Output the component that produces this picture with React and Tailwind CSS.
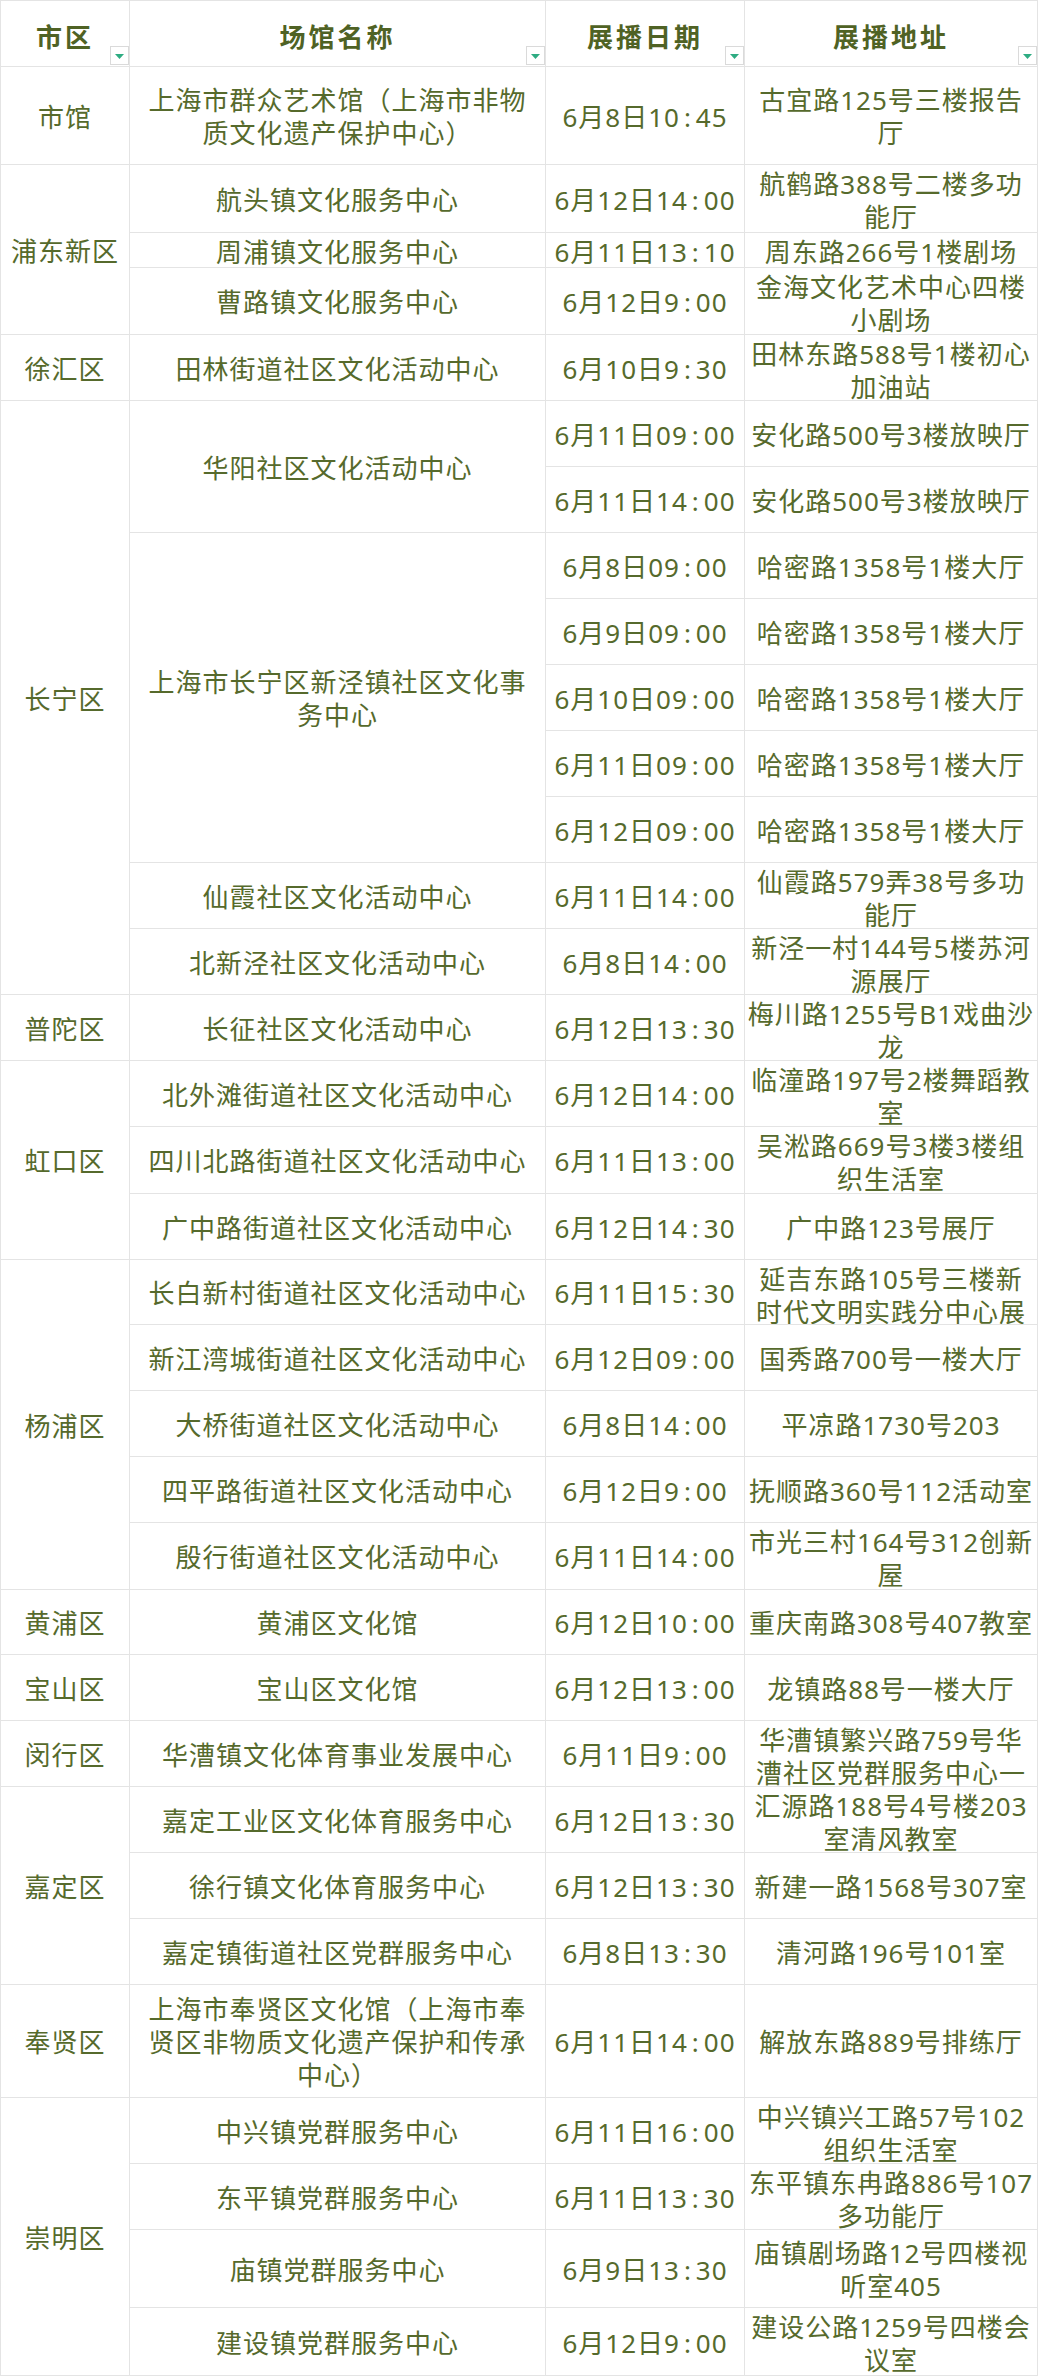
import React from 'react';

// "|" marks where the line breaks in the source sheet
const groups = [
  { d: '市馆', items: [{ n: '上海市群众艺术馆（上海市非物|质文化遗产保护中心）', s: [['6月8日10:45', '古宜路125号三楼报告|厅']] }] },
  {
    d: '浦东新区',
    items: [
      { n: '航头镇文化服务中心', s: [['6月12日14:00', '航鹤路388号二楼多功|能厅']] },
      { n: '周浦镇文化服务中心', s: [['6月11日13:10', '周东路266号1楼剧场']] },
      { n: '曹路镇文化服务中心', s: [['6月12日9:00', '金海文化艺术中心四楼|小剧场']] },
    ],
  },
  { d: '徐汇区', items: [{ n: '田林街道社区文化活动中心', s: [['6月10日9:30', '田林东路588号1楼初心|加油站']] }] },
  {
    d: '长宁区',
    items: [
      { n: '华阳社区文化活动中心', s: [['6月11日09:00', '安化路500号3楼放映厅'], ['6月11日14:00', '安化路500号3楼放映厅']] },
      {
        n: '上海市长宁区新泾镇社区文化事|务中心',
        s: [
          ['6月8日09:00', '哈密路1358号1楼大厅'],
          ['6月9日09:00', '哈密路1358号1楼大厅'],
          ['6月10日09:00', '哈密路1358号1楼大厅'],
          ['6月11日09:00', '哈密路1358号1楼大厅'],
          ['6月12日09:00', '哈密路1358号1楼大厅'],
        ],
      },
      { n: '仙霞社区文化活动中心', s: [['6月11日14:00', '仙霞路579弄38号多功|能厅']] },
      { n: '北新泾社区文化活动中心', s: [['6月8日14:00', '新泾一村144号5楼苏河|源展厅']] },
    ],
  },
  { d: '普陀区', items: [{ n: '长征社区文化活动中心', s: [['6月12日13:30', '梅川路1255号B1戏曲沙|龙']] }] },
  {
    d: '虹口区',
    items: [
      { n: '北外滩街道社区文化活动中心', s: [['6月12日14:00', '临潼路197号2楼舞蹈教|室']] },
      { n: '四川北路街道社区文化活动中心', s: [['6月11日13:00', '吴淞路669号3楼3楼组|织生活室']] },
      { n: '广中路街道社区文化活动中心', s: [['6月12日14:30', '广中路123号展厅']] },
    ],
  },
  {
    d: '杨浦区',
    items: [
      { n: '长白新村街道社区文化活动中心', s: [['6月11日15:30', '延吉东路105号三楼新|时代文明实践分中心展|厅']] },
      { n: '新江湾城街道社区文化活动中心', s: [['6月12日09:00', '国秀路700号一楼大厅']] },
      { n: '大桥街道社区文化活动中心', s: [['6月8日14:00', '平凉路1730号203']] },
      { n: '四平路街道社区文化活动中心', s: [['6月12日9:00', '抚顺路360号112活动室']] },
      { n: '殷行街道社区文化活动中心', s: [['6月11日14:00', '市光三村164号312创新|屋']] },
    ],
  },
  { d: '黄浦区', items: [{ n: '黄浦区文化馆', s: [['6月12日10:00', '重庆南路308号407教室']] }] },
  { d: '宝山区', items: [{ n: '宝山区文化馆', s: [['6月12日13:00', '龙镇路88号一楼大厅']] }] },
  { d: '闵行区', items: [{ n: '华漕镇文化体育事业发展中心', s: [['6月11日9:00', '华漕镇繁兴路759号华|漕社区党群服务中心一|楼']] }] },
  {
    d: '嘉定区',
    items: [
      { n: '嘉定工业区文化体育服务中心', s: [['6月12日13:30', '汇源路188号4号楼203|室清风教室']] },
      { n: '徐行镇文化体育服务中心', s: [['6月12日13:30', '新建一路1568号307室']] },
      { n: '嘉定镇街道社区党群服务中心', s: [['6月8日13:30', '清河路196号101室']] },
    ],
  },
  { d: '奉贤区', items: [{ n: '上海市奉贤区文化馆（上海市奉|贤区非物质文化遗产保护和传承|中心）', s: [['6月11日14:00', '解放东路889号排练厅']] }] },
  {
    d: '崇明区',
    items: [
      { n: '中兴镇党群服务中心', s: [['6月11日16:00', '中兴镇兴工路57号102|组织生活室']] },
      { n: '东平镇党群服务中心', s: [['6月11日13:30', '东平镇东冉路886号107|多功能厅']] },
      { n: '庙镇党群服务中心', s: [['6月9日13:30', '庙镇剧场路12号四楼视|听室405']] },
      { n: '建设镇党群服务中心', s: [['6月12日9:00', '建设公路1259号四楼会|议室']] },
    ],
  },
];

const spans = {
  1: 'row-span-1',
  2: 'row-span-2',
  3: 'row-span-3',
  4: 'row-span-4',
  5: 'row-span-5',
  9: 'row-span-9',
};

const cell =
  'bg-white flex [align-items:safe_center] justify-center text-center overflow-hidden leading-[33px] whitespace-nowrap';

function FilterMark() {
  return (
    <span className="absolute right-0 bottom-px w-[19px] h-[19px] border border-[#dadada] bg-white flex items-center justify-center">
      <svg width="9" height="5" viewBox="0 0 9 5" className="mt-[2px]">
        <path d="M0 0h9L4.5 5z" fill="#2eac82" />
      </svg>
    </span>
  );
}

function Lines({ text }) {
  return (
    <div className="pt-[3px]">
      {text.split('|').map((l) => (
        <div key={l}>{l}</div>
      ))}
    </div>
  );
}

function Time({ t }) {
  const [a, b] = t.split(':');
  return (
    <div className="pt-[3px]">
      {a}
      <span className="mx-[4px]">:</span>
      {b}
    </div>
  );
}

export default function App() {
  const heads = ['市区', '场馆名称', '展播日期', '展播地址'];

  return (
    <div
      className="w-[1038px] bg-white text-[#566a2c] text-[26px] tracking-[1px]"
      style={{ fontFamily: '"Noto Sans", "Noto Sans CJK SC", sans-serif' }}
    >
      <div className="grid grid-cols-[128px_415px_198px_292px] grid-rows-[65px_97px_67px_34px_66px_65px_65px_65px_65px_65px_65px_65px_65px_65px_65px_65px_65px_66px_65px_64px_65px_65px_65px_66px_64px_65px_65px_65px_65px_65px_112px_65px_65px_77px_67px] gap-px p-px bg-[#e4e4e4]">
        {heads.map((h) => (
          <div key={h} className="relative bg-white flex items-center justify-center pt-2 font-bold tracking-[3px] text-[#4f6224]">
            {h}
            <FilterMark />
          </div>
        ))}

        {groups.map((g) => {
          const rows = g.items.reduce((acc, it) => acc + it.s.length, 0);
          return g.items.map((it, i) =>
            it.s.map((s, j) => (
              <React.Fragment key={g.d + i + '-' + j}>
                {i === 0 && j === 0 && (
                  <div className={`${cell} ${spans[rows]}`}>
                    <Lines text={g.d} />
                  </div>
                )}
                {j === 0 && (
                  <div className={`${cell} ${spans[it.s.length]}`}>
                    <Lines text={it.n} />
                  </div>
                )}
                <div className={cell}>
                  <Time t={s[0]} />
                </div>
                <div className={cell}>
                  <Lines text={s[1]} />
                </div>
              </React.Fragment>
            ))
          );
        })}
      </div>
    </div>
  );
}
